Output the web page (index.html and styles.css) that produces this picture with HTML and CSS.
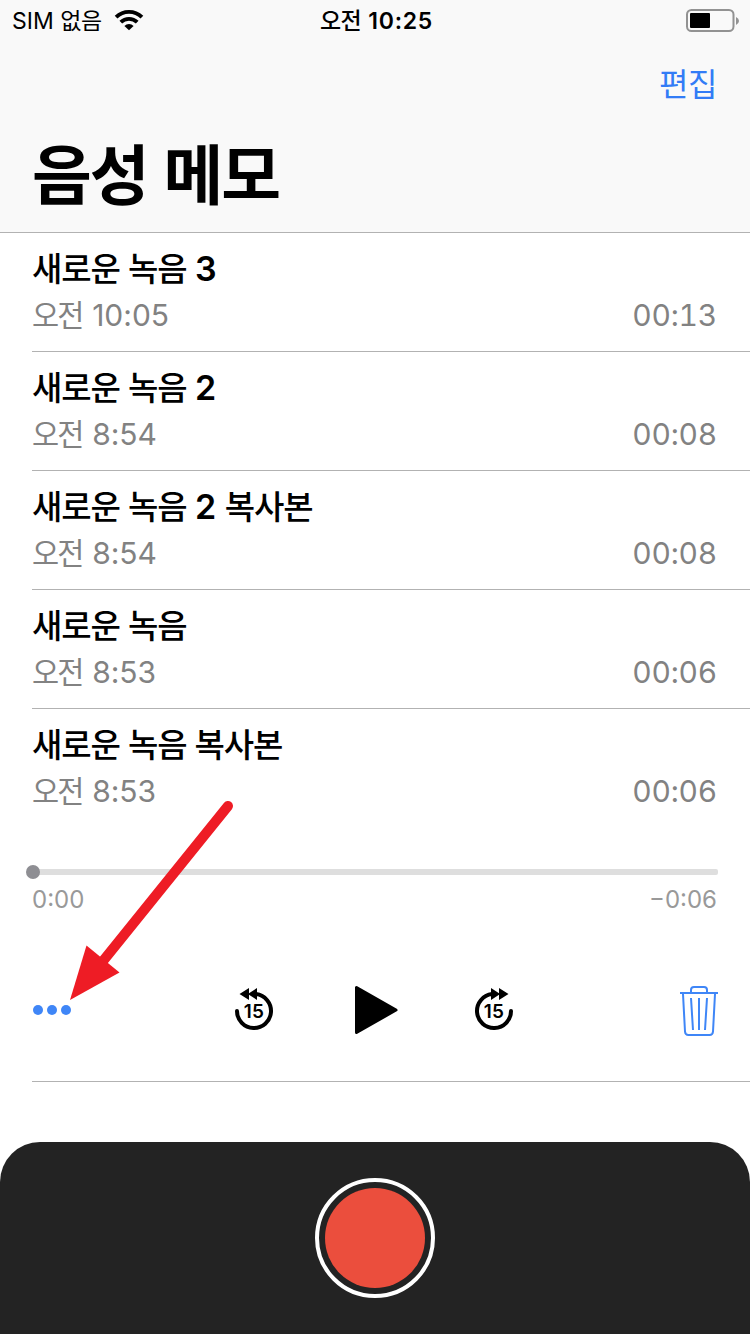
FILE: index.html
```html
<!DOCTYPE html>
<html lang="ko">
<head>
<meta charset="utf-8">
<title>음성 메모</title>
<link rel="stylesheet" href="styles.css">
</head>
<body>
<div class="screen">
  <header class="header">
    <div class="status">
      <div class="carrier"><span>SIM <span class="ko">없음</span></span>
        <svg class="wifi" width="30" height="22" viewBox="0 0 30 22"><g fill="none" stroke="#000" stroke-width="3.9"><path d="M2.1 8.2a18.4 18.4 0 0 1 25.8 0"/><path d="M6.8 13.200a11.800 11.800 0 0 1 16.400 0"/></g><path d="M15 21.300l-4.600-4.400a6.500 6.500 0 0 1 9.200 0z"/></svg>
      </div>
      <div class="clock"><span class="ko">오전</span> 10:25</div>
      <svg class="battery" width="54" height="24" viewBox="0 0 54 24"><rect x="1" y="1" width="46.500" height="21" rx="4.500" fill="none" stroke="#929292" stroke-width="2"/><rect x="4" y="4" width="20" height="15" rx="1" fill="#000"/><path d="M50 8q3 1.500 3 4t-3 4z" fill="#929292"/></svg>
    </div>
    <div class="nav"><span class="edit">편집</span></div>
    <h1 class="heading">음성 메모</h1>
  </header>
  <main class="list">
    <article class="row"><h2 class="title"><span class="ko">새로운 녹음</span> 3</h2><div class="meta"><span><span class="ko">오전</span> 10:05</span><span class="length">00:13</span></div></article>
    <article class="row"><h2 class="title"><span class="ko">새로운 녹음</span> 2</h2><div class="meta"><span><span class="ko">오전</span> 8:54</span><span class="length">00:08</span></div></article>
    <article class="row"><h2 class="title"><span class="ko">새로운 녹음</span> 2 <span class="ko">복사본</span></h2><div class="meta"><span><span class="ko">오전</span> 8:54</span><span class="length">00:08</span></div></article>
    <article class="row"><h2 class="title"><span class="ko">새로운 녹음</span></h2><div class="meta"><span><span class="ko">오전</span> 8:53</span><span class="length">00:06</span></div></article>
    <article class="row open"><h2 class="title"><span class="ko">새로운 녹음 복사본</span></h2><div class="meta"><span><span class="ko">오전</span> 8:53</span><span class="length">00:06</span></div>
      <div class="track"><span class="knob"></span></div>
      <div class="times"><span>0:00</span><span>−0:06</span></div>
      <div class="controls">
        <svg class="more" width="40" height="12" viewBox="0 0 40 12" fill="#3f86f7"><circle cx="6" cy="6" r="5"/><circle cx="20" cy="6" r="5"/><circle cx="34" cy="6" r="5"/></svg>
        <div class="transport">
          <svg width="40" height="44" viewBox="0 0 40 44"><path d="M3 23a17 17 0 1 0 19-16.900" fill="none" stroke="#000" stroke-width="4" stroke-linecap="round"/><path d="M5.500 6L15 0v5.200L23 0v12l-8-5.200V12z"/><text class="skip" x="20" y="30.300">15</text></svg>
          <svg width="44" height="50" viewBox="0 0 44 50"><path d="M2.500 2.500v45L42 25z" stroke="#000" stroke-width="3" stroke-linejoin="round"/></svg>
          <svg width="40" height="44" viewBox="0 0 40 44"><path d="M37 23a17 17 0 1 1-19-16.900" fill="none" stroke="#000" stroke-width="4" stroke-linecap="round"/><path d="M34.500 6L25 0v5.200L17 0v12l8-5.200V12z"/><text class="skip" x="20" y="30.300">15</text></svg>
        </div>
        <svg class="trash" width="38" height="50" viewBox="0 0 38 50" fill="none" stroke="#3f86f7" stroke-width="2"><path d="M0 7h38M11 7V4q0-3 3-3h10q3 0 3 3v3M3 8l2 37.500q.2 3.500 3.500 3.500h21q3.300 0 3.500-3.500L35 8M11 12l2 32M19 12v32M27 12l-2 32"/></svg>
      </div>
    </article>
  </main>
  <footer class="recorder"><div class="record"></div></footer>
  <svg class="pointer" width="170" height="206" viewBox="0 0 170 206" fill="#ee1c25"><path d="M163 11L38 166" stroke="#ee1c25" stroke-width="10" stroke-linecap="round"/><path d="M5 205l16.500-54.500L54.500 177.500z"/></svg>
</div>
</body>
</html>
```
FILE: styles.css
```css
* { box-sizing: border-box; }
body { margin: 0; background: #fff; font-family: Inter, "Noto Sans CJK KR", sans-serif; color: #000; }
svg { display: block; flex: none; }
h1, h2 { margin: 0; }
.screen { position: relative; width: 750px; height: 1334px; display: flex; flex-direction: column; overflow: hidden; }
.ko { font-family: "Noto Sans CJK KR", sans-serif; line-height: 0; }
.header { height: 233px; background: #f9f9f9; border-bottom: 1px solid #b2b2b2; }
.status { height: 42px; display: grid; grid-template-columns: 1fr auto 1fr; align-items: center; padding: 0 10px 0 12px; font-size: 23px; line-height: 42px; white-space: nowrap; }
.carrier { display: flex; align-items: center; gap: 12px; }
.carrier .ko { letter-spacing: -0.3px; }
.wifi { margin-bottom: 3px; }
.clock { font-weight: 600; letter-spacing: 0.7px; word-spacing: 1px; margin-left: 1px; }
.clock .ko { font-weight: 500; letter-spacing: -0.8px; }
.battery { justify-self: end; }
.nav { height: 86px; display: flex; justify-content: flex-end; padding: 15px 33px 0 0; line-height: 50px; }
.edit { color: #327cf6; font: 32px/50px "Noto Sans CJK KR", sans-serif; letter-spacing: -0.4px; }
.heading { padding: 1px 0 0 32px; font: bold 65px/84px "Noto Sans CJK KR", sans-serif; letter-spacing: -2.1px; }
.list { flex: 1; padding-left: 32px; }
.row { height: 119px; padding: 12px 34px 0 0; border-bottom: 1px solid #b2b2b2; }
.title { height: 48px; font-size: 34px; line-height: 48px; font-weight: 600; white-space: nowrap; }
.title .ko { font-size: 33px; font-weight: 500; letter-spacing: -1.1px; }
.meta { height: 44px; display: flex; justify-content: space-between; font-size: 30px; line-height: 44px; color: #828282; }
.meta .ko { font-size: 29.500px; letter-spacing: -1.8px; margin-right: 1px; }
.length { font-variant-numeric: tabular-nums; letter-spacing: -0.2px; margin-right: -1px; }
.open { height: 373px; }
.track { height: 6px; margin: 56px -2px 0 0; border-radius: 2px; background: #dedede; display: flex; align-items: center; }
.knob { width: 14px; height: 14px; margin-left: -6px; border-radius: 50%; background: #8e8e93; flex: none; }
.times { display: flex; justify-content: space-between; margin: 10px -1px 0 0; font-size: 24px; line-height: 30px; color: #999; }
.controls { display: flex; justify-content: space-between; align-items: center; height: 50px; margin: 70px -2px 0 0; }
.transport { width: 280px; display: grid; grid-template-columns: 120px 120px 40px; align-items: center; margin-left: -4px; }
.skip { font: 600 19px Inter, sans-serif; letter-spacing: 0.3px; text-anchor: middle; }
.trash { margin-top: 2px; }
.recorder { height: 192px; padding-top: 36px; border-radius: 40px 40px 0 0; background: #232323; display: flex; justify-content: center; }
.record { width: 120px; height: 120px; padding: 6px; border: 4px solid #fff; border-radius: 50%; background: #eb4e3d content-box; }
.pointer { position: absolute; left: 65px; top: 795px; }
```
